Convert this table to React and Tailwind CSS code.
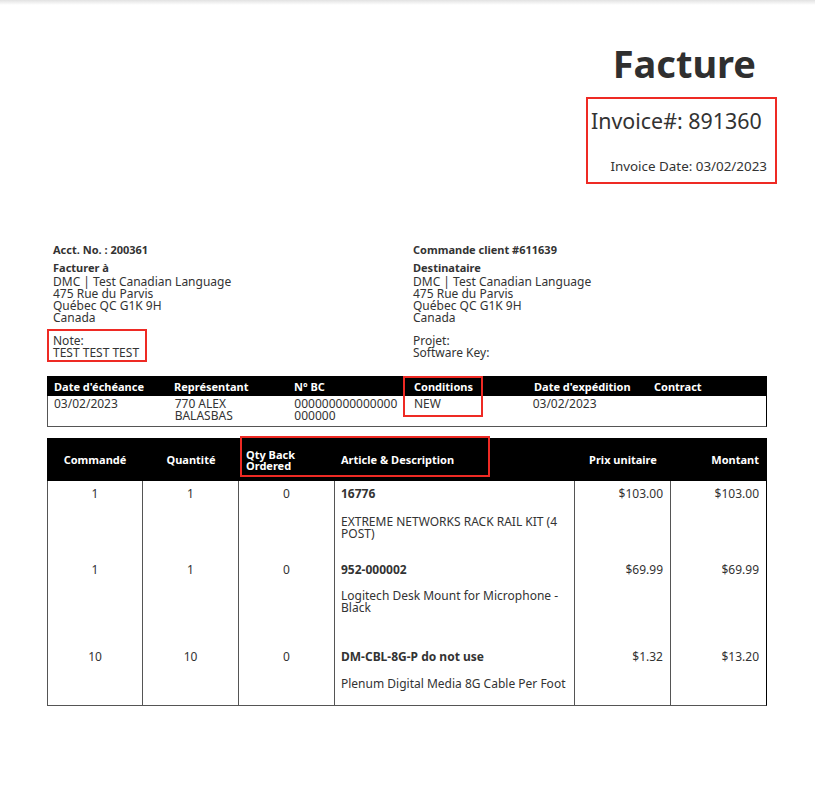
import React from "react";

const font = { fontFamily: '"Noto Sans", "Open Sans", sans-serif' };

function AddressBlock({ title, label, lines, extra, children }) {
  return (
    <div className="relative">
      <div className="text-[11px] leading-[12px] font-bold">{title}</div>
      <div className="mt-[6px] text-[11px] leading-[12px] font-bold">{label}</div>
      <div className="mt-[2px] text-[12px] leading-[12px]">
        {lines.map((l) => (
          <div key={l}>{l}</div>
        ))}
      </div>
      <div className="relative mt-[11px] text-[12px] leading-[12px]">
        {extra.map((l) => (
          <div key={l}>{l}</div>
        ))}
        {children}
      </div>
    </div>
  );
}

const items = [
  { c: "1", q: "1", b: "0", code: "16776", desc: ["EXTREME NETWORKS RACK RAIL KIT (4", "POST)"], pu: "$103.00", m: "$103.00", h: "h-[76px]", mt: "mt-[16px]" },
  { c: "1", q: "1", b: "0", code: "952-000002", desc: ["Logitech Desk Mount for Microphone -", "Black"], pu: "$69.99", m: "$69.99", h: "h-[87px]", mt: "mt-[14px]" },
  { c: "10", q: "10", b: "0", code: "DM-CBL-8G-P do not use", desc: ["Plenum Digital Media 8G Cable Per Foot"], pu: "$1.32", m: "$13.20", h: "h-[61px]", mt: "mt-[15px]" },
];

export default function App() {
  const addr = ["DMC | Test Canadian Language", "475 Rue du Parvis", "Québec QC G1K 9H", "Canada"];
  return (
    <div className="w-[815px] min-h-[792px] bg-white text-[#333]" style={font}>
      <div className="h-[5px] bg-gradient-to-b from-[#e2e2e2] to-white" />
      {/* Header */}
      <div className="flex flex-col items-end pr-[38px]">
        <div className="mt-[39px] mr-[21px] text-[38px] leading-[38px] font-bold text-[#2f2f2f]">Facture</div>
        <div className="mt-[15px] w-[191px] border-2 border-[#ee2a24] pt-[11px] pb-[9px] pl-[3px] pr-[8px]">
          <div className="text-[21.4px] leading-[22px] whitespace-nowrap">Invoice#: 891360</div>
          <div className="mt-[28px] text-[13.4px] leading-[13px] text-right whitespace-nowrap">Invoice Date: 03/02/2023</div>
        </div>
      </div>

      {/* Addresses */}
      <div className="mt-[60px] pl-[53px] grid grid-cols-[360px_360px]">
        <AddressBlock title="Acct. No. : 200361" label="Facturer à" lines={addr} extra={["Note:", "TEST TEST TEST"]}>
          <div className="absolute left-[-6px] top-[-6px] w-[100px] h-[33px] border-2 border-[#ee2a24]" />
        </AddressBlock>
        <AddressBlock title="Commande client #611639" label="Destinataire" lines={addr} extra={["Projet:", "Software Key:"]} />
      </div>

      {/* Table 1 */}
      <div className="relative ml-[47px] mt-[17px] w-[720px]">
        <div className="grid grid-cols-6 h-[20px] bg-black text-white text-[11px] leading-[21px] font-bold">
          {["Date d'échéance", "Représentant", "N° BC", "Conditions", "Date d'expédition", "Contract"].map((h) => (
            <div key={h} className="pl-[7px] whitespace-nowrap">{h}</div>
          ))}
        </div>
        <div className="grid grid-cols-6 border-l border-b border-[#555] border-r border-r-black pt-[2px] pb-[4px] text-[12px] leading-[12px]">
          <div className="pl-[6px]">03/02/2023</div>
          <div className="pl-[7px]">770 ALEX<br />BALASBAS</div>
          <div className="pl-[7px]">000000000000000<br />000000</div>
          <div className="pl-[7px]">NEW</div>
          <div className="pl-[6px]">03/02/2023</div>
          <div className="pl-[7px]"></div>
        </div>
        <div className="absolute left-[356px] top-0 w-[80px] h-[41px] border-2 border-[#ee2a24]" />
      </div>

      {/* Table 2 */}
      <div className="relative ml-[47px] mt-[11px] w-[720px]">
        <div className="grid grid-cols-[96px_96px_96px_240px_96px_96px] h-[43px] bg-black text-white text-[11px] leading-[11px] font-bold items-center">
          <div className="text-center">Commandé</div>
          <div className="text-center">Quantité</div>
          <div className="pl-[7px]">Qty Back<br />Ordered</div>
          <div className="pl-[6px]">Article &amp; Description</div>
          <div className="text-center">Prix unitaire</div>
          <div className="text-right pr-[8px]">Montant</div>
        </div>
        <div className="border-l border-b border-[#555] border-r border-r-black text-[12px] leading-[12px]">
          {items.map((it, i) => (
            <div key={i} className={`grid grid-cols-[95px_96px_96px_240px_96px_96px] ${it.h}`}>
              <div className="border-r border-[#555] pt-[7px] text-center">{it.c}</div>
              <div className="border-r border-[#555] pt-[7px] text-center">{it.q}</div>
              <div className="border-r border-[#555] pt-[7px] text-center">{it.b}</div>
              <div className="border-r border-[#555] pt-[7px] pl-[6px]">
                <div className="font-bold">{it.code}</div>
                <div className={it.mt}>
                  {it.desc.map((d) => (
                    <div key={d}>{d}</div>
                  ))}
                </div>
              </div>
              <div className="border-r border-[#555] pt-[7px] pr-[7px] text-right">{it.pu}</div>
              <div className="pt-[7px] pr-[8px] text-right">{it.m}</div>
            </div>
          ))}
        </div>
        <div className="absolute left-[193px] top-[-2px] w-[250px] h-[41px] border-2 border-[#ee2a24]" />
      </div>
    </div>
  );
}
